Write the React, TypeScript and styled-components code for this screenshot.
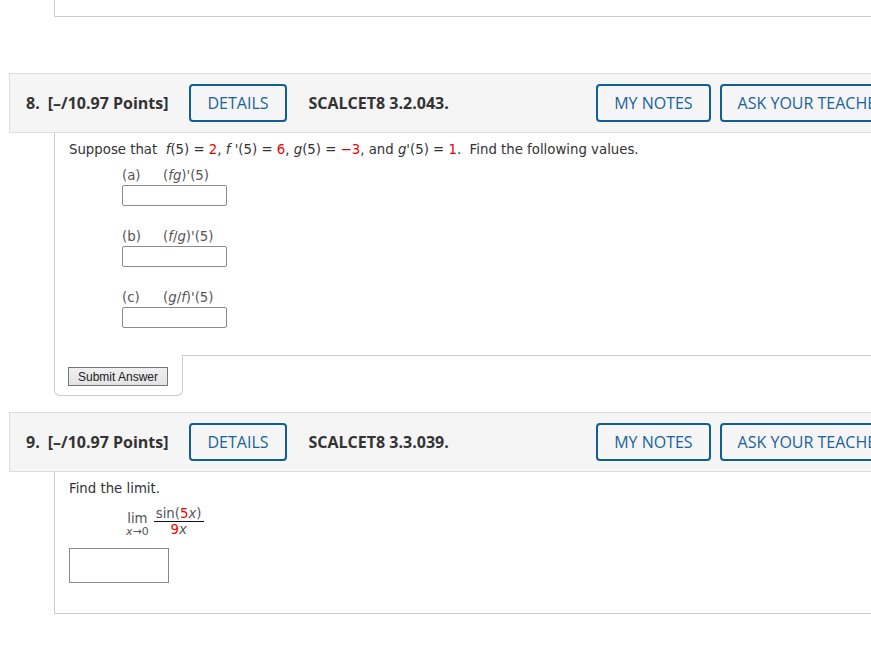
import styled, { createGlobalStyle } from 'styled-components'

const GlobalStyle = createGlobalStyle`
  html, body {
    margin: 0;
    padding: 0;
    overflow: hidden;
    background: #fff;
  }
`

function ActionButtons() {
  return (
    <>
      <Spacer />
      <OutlineButton>MY NOTES</OutlineButton>
      <OutlineButton $gap={9}>ASK YOUR TEACHER</OutlineButton>
    </>
  )
}

function QuestionHeader({ num, code }: { num: number; code: string }) {
  return (
    <Header>
      <Num>{num}.</Num>
      <Points>[–/10.97 Points]</Points>
      <OutlineButton $gap={21}>DETAILS</OutlineButton>
      <Code>{code}</Code>
      <ActionButtons />
    </Header>
  )
}

function Part({ letter, children }: { letter: string; children: React.ReactNode }) {
  return (
    <PartBlock>
      <PartLabel>
        <Letter>({letter})</Letter>
        <Expr>{children}</Expr>
      </PartLabel>
      <AnswerBox type="text" />
    </PartBlock>
  )
}

function App() {
  return (
    <Page>
      <GlobalStyle />
      <PrevTail />

      <Question $top={56}>
        <QuestionHeader num={8} code="SCALCET8 3.2.043." />
        <Body $bottom={27}>
          <Intro>
            Suppose that&nbsp; <i>f</i>(5) = <Red>2</Red>, <i>f</i> '(5) = <Red>6</Red>,{' '}
            <i>g</i>(5) = <Red>−3</Red>, and <i>g</i>'(5) = <Red>1</Red>.&nbsp; Find the following values.
          </Intro>
          <Part letter="a">
            (<i>fg</i>)'(5)
          </Part>
          <Part letter="b">
            (<i>f</i>/<i>g</i>)'(5)
          </Part>
          <Part letter="c">
            (<i>g</i>/<i>f</i>)'(5)
          </Part>
        </Body>
        <SubmitTab>
          <SubmitButton>Submit Answer</SubmitButton>
        </SubmitTab>
      </Question>

      <Question $top={16}>
        <QuestionHeader num={9} code="SCALCET8 3.3.039." />
        <Body $bottom={30}>
          <Intro>Find the limit.</Intro>
          <Limit>
            <LimStack>
              <span>lim</span>
              <Under>
                <i>x</i>→0
              </Under>
            </LimStack>
            <Fraction>
              <Numer>
                sin(<Red>5</Red><i>x</i>)
              </Numer>
              <Denom>
                <Red>9</Red><i>x</i>
              </Denom>
            </Fraction>
          </Limit>
          <LimitBox type="text" />
        </Body>
      </Question>
    </Page>
  )
}

const Page = styled.div`
  width: 912px;
  padding-left: 9px;
  font-family: 'Open Sans', 'DejaVu Sans', sans-serif;
`

const PrevTail = styled.div`
  margin-left: 45px;
  height: 16px;
  border-left: 1px solid #ccc;
  border-bottom: 1px solid #ccc;
`

const Question = styled.section<{ $top: number }>`
  margin-top: ${(p) => p.$top}px;
`

const Header = styled.div`
  display: flex;
  align-items: center;
  height: 58px;
  padding: 0 16px;
  background: #f5f5f5;
  border: 1px solid #ddd;
  color: #333;
  font-size: 16px;
`

const Num = styled.span`
  font-weight: 700;
`

const Points = styled.span`
  margin-left: 8px;
  font-weight: 700;
`

const Code = styled.span`
  margin-left: 22px;
  font-weight: 700;
`

const Spacer = styled.div`
  flex: 1;
`

const OutlineButton = styled.button<{ $gap?: number }>`
  margin-left: ${(p) => p.$gap ?? 0}px;
  height: 38px;
  padding: 0 16px;
  background: transparent;
  border: 2px solid #0f5f94;
  border-radius: 4px;
  color: #17639d;
  font-family: 'Open Sans', sans-serif;
  font-size: 16px;
  white-space: nowrap;
  cursor: pointer;
`

const Body = styled.div<{ $bottom?: number }>`
  margin-left: 45px;
  padding: 8px 14px ${(p) => p.$bottom ?? 28}px;
  border-left: 1px solid #ccc;
  border-bottom: 1px solid #ccc;
  color: #333;
  font-family: 'DejaVu Sans', Verdana, sans-serif;
  font-size: 13.3px;
`

const Intro = styled.p`
  margin: 0;
  line-height: 18px;
`

const Red = styled.span`
  color: #e00;
`

const PartBlock = styled.div`
  margin: 9px 0 0 53px;

  & + & {
    margin-top: 23px;
  }
`

const PartLabel = styled.div`
  display: flex;
  line-height: 16px;
  color: #555;
`

const Letter = styled.span`
  width: 41px;
`

const Expr = styled.span``

const AnswerBox = styled.input`
  display: block;
  box-sizing: border-box;
  width: 105px;
  height: 21px;
  margin-top: 1px;
  border: 1px solid #8a8a8a;
  border-radius: 2px;
  background: #fff;
`

const SubmitTab = styled.div`
  margin: -1px 0 0 45px;
  box-sizing: border-box;
  width: 129px;
  padding: 12px 13px 9px;
  background: #fff;
  border: 1px solid #ccc;
  border-top: none;
  border-radius: 0 0 6px 6px;
`

const SubmitButton = styled.button`
  display: block;
  width: 100px;
  height: 19px;
  padding: 0;
  border: 1px solid #767676;
  background: linear-gradient(#f0f0f0, #e3e3e3);
  color: #222;
  font-family: 'Liberation Sans', Arial, sans-serif;
  font-size: 12px;
`

const Limit = styled.div`
  display: flex;
  align-items: center;
  margin: 6px 0 0 57px;
  color: #555;
`

const LimStack = styled.div`
  display: flex;
  flex-direction: column;
  align-items: center;
  line-height: 13px;
  padding-top: 8px;
`

const Under = styled.span`
  font-size: 11px;
`

const Fraction = styled.div`
  display: flex;
  flex-direction: column;
  align-items: center;
  margin-left: 5px;
  line-height: 15px;
`

const Numer = styled.span`
  padding: 0 2px;
  border-bottom: 1px solid #111;
`

const Denom = styled.span``

const LimitBox = styled.input`
  display: block;
  box-sizing: border-box;
  width: 100px;
  height: 35px;
  margin-top: 10px;
  border: 1px solid #8a8a8a;
  background: #fff;
`

export default App
